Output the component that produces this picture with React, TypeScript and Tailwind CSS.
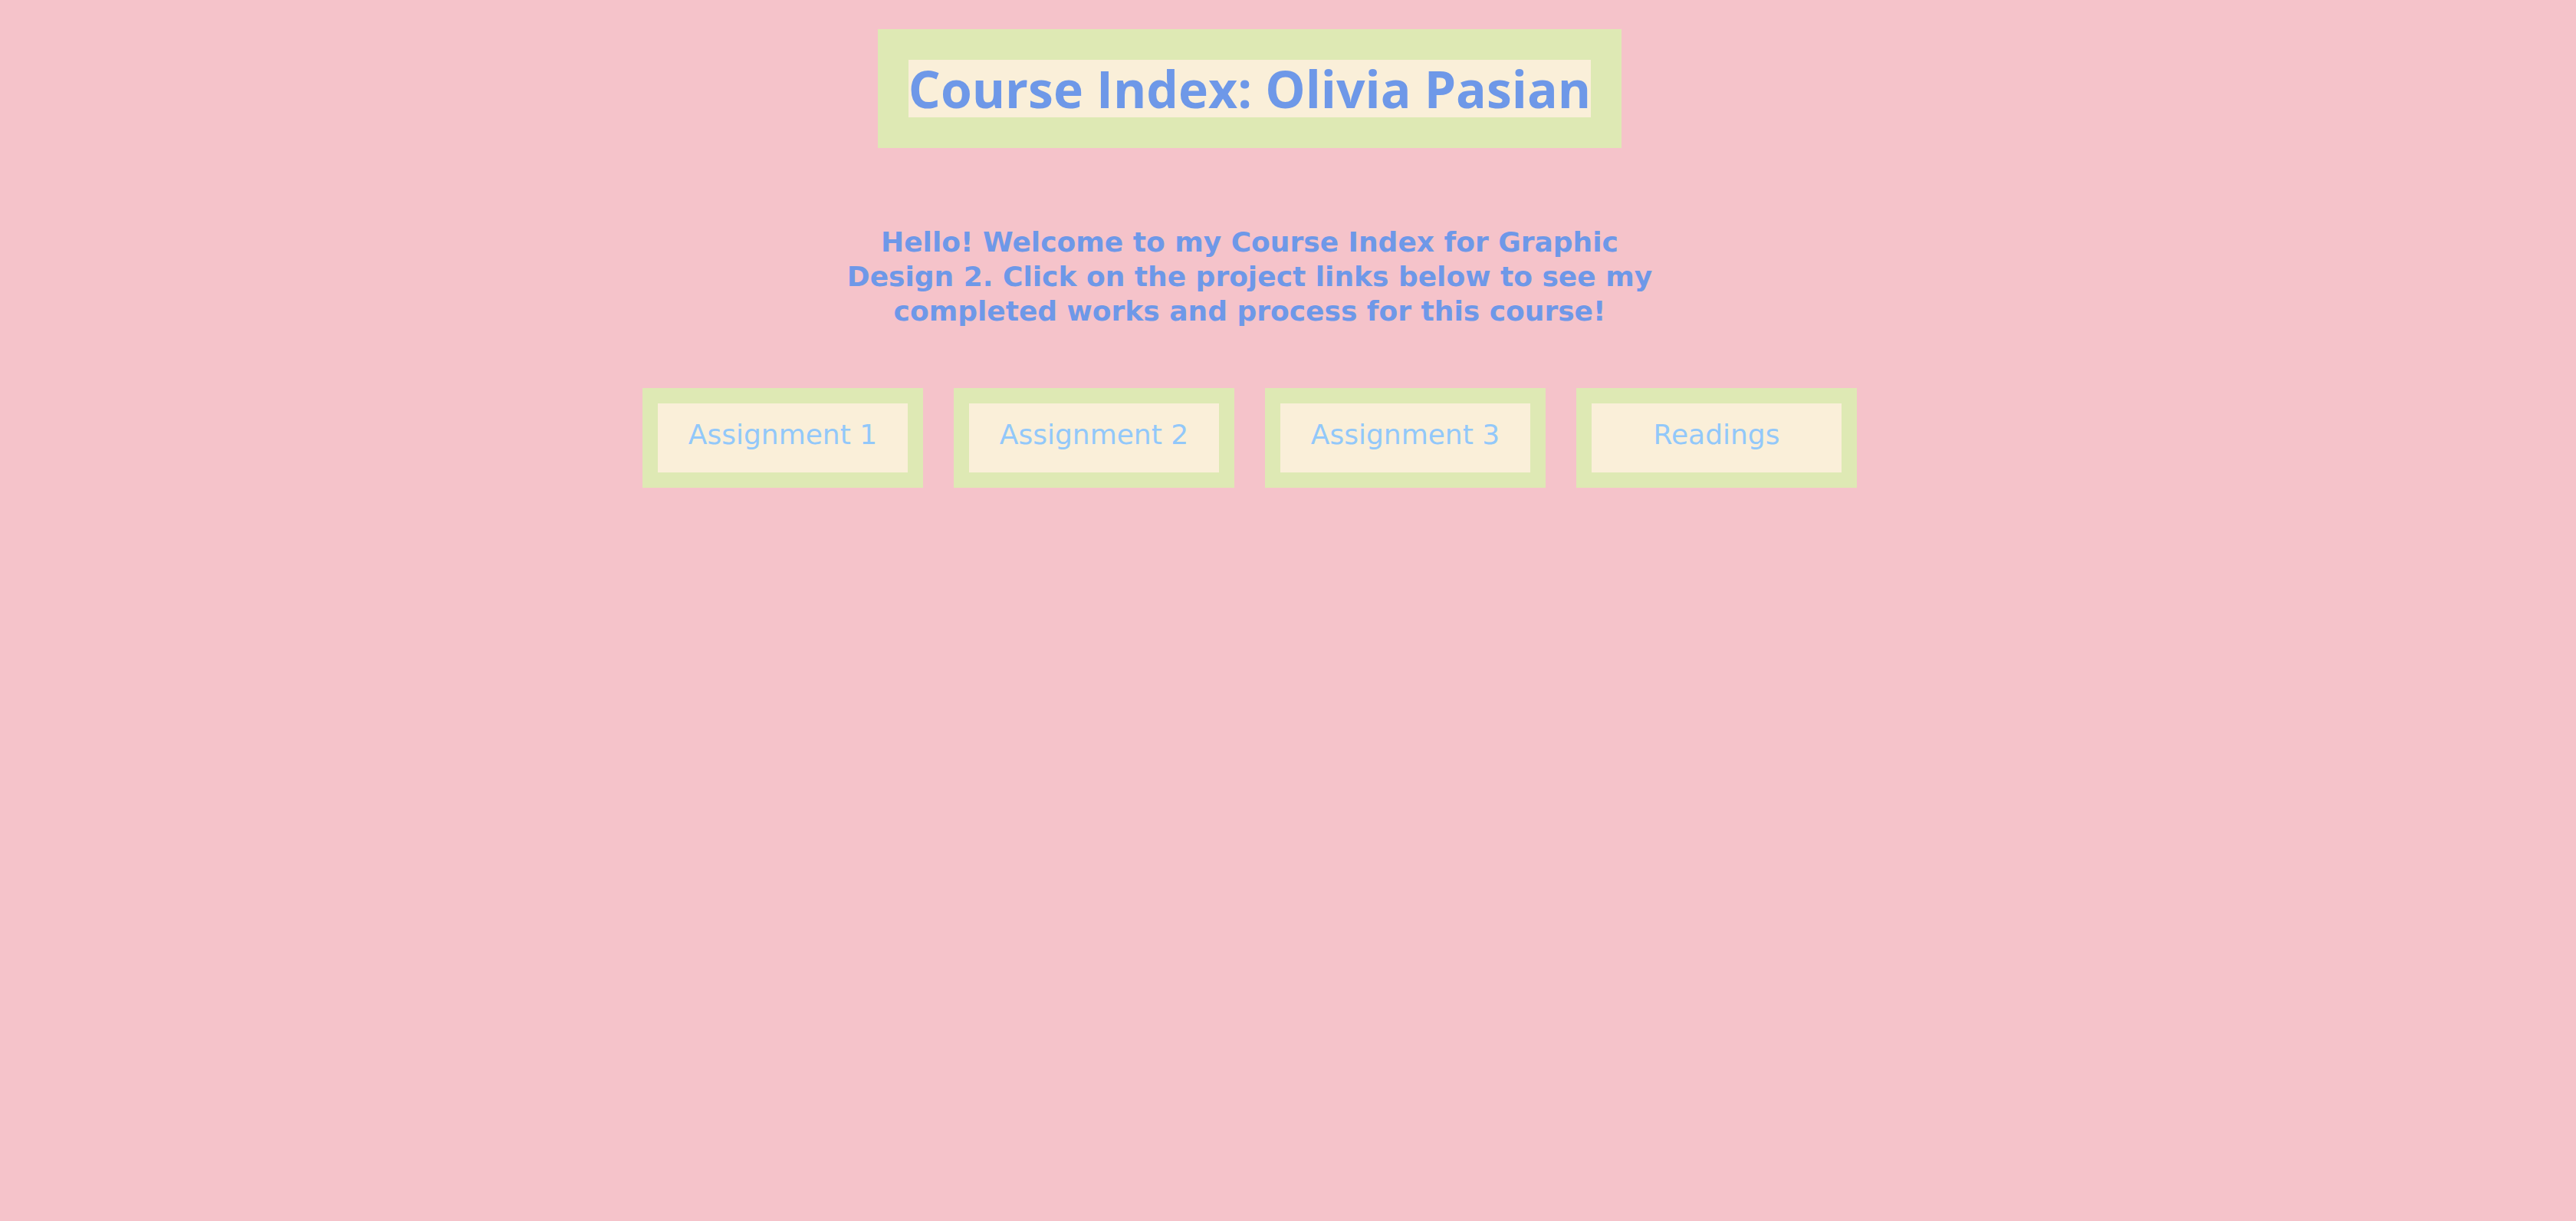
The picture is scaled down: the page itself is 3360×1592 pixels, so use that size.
import React from 'react';

const links = ['Assignment 1', 'Assignment 2', 'Assignment 3', 'Readings'];

export default function App() {
  return (
    <div className="min-h-screen w-full bg-[#f5c3ca] pt-[38px] pr-[100px] flex flex-col items-center">
      {/* Title */}
      <div className="bg-[#dee9b4] p-[40px]">
        <h1 className="h-[75px] bg-[#faefd9] text-[#6e98e8] text-[66px] leading-[75px] font-bold whitespace-nowrap font-['Open_Sans','DejaVu_Sans',sans-serif]">
          Course Index: Olivia Pasian
        </h1>
      </div>

      {/* Intro */}
      <p className="mt-[100px] text-center text-[#6e98e8] text-[36px] leading-[45px] font-bold font-['DejaVu_Sans',sans-serif]">
        Hello! Welcome to my Course Index for Graphic
        <br />
        Design 2. Click on the project links below to see my
        <br />
        completed works and process for this course!
      </p>

      {/* Links */}
      <div className="mt-[78px] flex gap-[40px]">
        {links.map((l) => (
          <a
            key={l}
            href="#"
            className="block border-[20px] border-[#dee9b4] bg-[#faefd9] w-[366px] h-[130px] pb-[8px] flex items-center justify-center text-[#92c8fa] text-[36px] font-['DejaVu_Sans',sans-serif]"
          >
            {l}
          </a>
        ))}
      </div>
    </div>
  );
}
